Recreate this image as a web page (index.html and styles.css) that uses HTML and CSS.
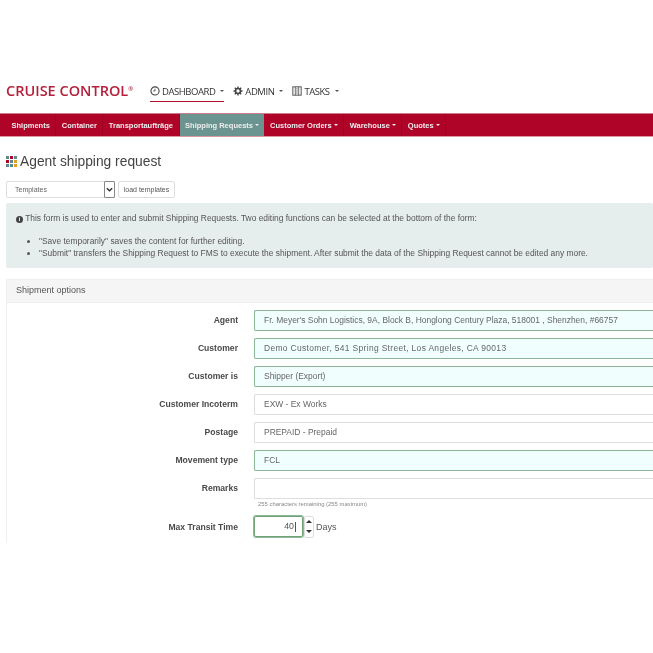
FILE: index.html
```html
<!DOCTYPE html>
<html lang="en">
<head>
    <meta charset="UTF-8">
    <meta name="viewport" content="width=device-width, initial-scale=1.0">
    <title>Agent shipping request</title>
    <link rel="stylesheet" href="styles.css">
</head>
<body>
    <div class="page">
        <header class="topbar">
            <div class="logo">CRUISE CONTROL<sup>®</sup></div>
            <nav class="topnav">
                <a class="topnav-item active">
                    <svg class="ico" viewBox="0 0 12 12"><circle cx="6" cy="6" r="4.9" fill="none" stroke="#444" stroke-width="1.3"/><path d="M6 3.2V6H3.8" fill="none" stroke="#444" stroke-width="1"/></svg>
                    DASHBOARD <span class="caret dark"></span>
                </a>
                <a class="topnav-item">
                    <svg class="ico" viewBox="0 0 12 12"><circle cx="6" cy="6" r="3" fill="none" stroke="#444" stroke-width="2"/><path d="M6 .6v2M6 9.4v2M.6 6h2M9.4 6h2M2.2 2.2l1.4 1.4M8.4 8.4l1.4 1.4M9.8 2.2L8.4 3.6M3.6 8.4L2.2 9.8" stroke="#444" stroke-width="1.7"/></svg>
                    ADMIN <span class="caret dark"></span>
                </a>
                <a class="topnav-item">
                    <svg class="ico" viewBox="0 0 12 12"><rect x="1" y="1" width="10" height="10" fill="none" stroke="#555" stroke-width="1.2"/><path d="M4 1v10M8 1v10M5 3.5h2M5 6h2M5 8.5h2" stroke="#555" stroke-width="1"/></svg>
                    TASKS <span class="caret dark"></span>
                </a>
            </nav>
        </header>

        <nav class="mainnav">
            <a>Shipments</a>
            <a>Container</a>
            <a>Transportaufträge</a>
            <a class="current">Shipping Requests <span class="caret"></span></a>
            <a>Customer Orders <span class="caret"></span></a>
            <a>Warehouse <span class="caret"></span></a>
            <a>Quotes <span class="caret"></span></a>
        </nav>

        <main class="content">
            <h1>
                <svg class="grid-ico" viewBox="0 0 11 11">
                    <rect x="0" y="0" width="3" height="3" fill="#5a8a8a"/><rect x="4" y="0" width="3" height="3" fill="#b0002a"/><rect x="8" y="0" width="3" height="3" fill="#5a8a8a"/>
                    <rect x="0" y="4" width="3" height="3" fill="#b0002a"/><rect x="4" y="4" width="3" height="3" fill="#5a8a8a"/><rect x="8" y="4" width="3" height="3" fill="#e0a020"/>
                    <rect x="0" y="8" width="3" height="3" fill="#5a8a8a"/><rect x="4" y="8" width="3" height="3" fill="#5a8a8a"/><rect x="8" y="8" width="3" height="3" fill="#e0a020"/>
                </svg>
                Agent shipping request
            </h1>

            <div class="template-row">
                <div class="template-select">
                    <span>Templates</span>
                    <span class="select-btn"><svg viewBox="0 0 10 10"><path d="M2 3.5l3 3 3-3" fill="none" stroke="#333" stroke-width="1.5"/></svg></span>
                </div>
                <button class="btn">load templates</button>
            </div>

            <div class="info-box">
                <p><span class="info-ico">i</span> This form is used to enter and submit Shipping Requests. Two editing functions can be selected at the bottom of the form:</p>
                <ul>
                    <li>"Save temporarily" saves the content for further editing.</li>
                    <li>"Submit" transfers the Shipping Request to FMS to execute the shipment. After submit the data of the Shipping Request cannot be edited any more.</li>
                </ul>
            </div>

            <section class="panel">
                <div class="panel-head">Shipment options</div>
                <div class="panel-body">
                    <div class="form-row">
                        <label>Agent</label>
                        <div class="field filled">Fr. Meyer's Sohn Logistics, 9A, Block B, Honglong Century Plaza, 518001 , Shenzhen, #66757</div>
                    </div>
                    <div class="form-row">
                        <label>Customer</label>
                        <div class="field filled wide">Demo Customer, 541 Spring Street, Los Angeles, CA 90013</div>
                    </div>
                    <div class="form-row">
                        <label>Customer is</label>
                        <div class="field filled">Shipper (Export)</div>
                    </div>
                    <div class="form-row">
                        <label>Customer Incoterm</label>
                        <div class="field">EXW - Ex Works</div>
                    </div>
                    <div class="form-row">
                        <label>Postage</label>
                        <div class="field">PREPAID - Prepaid</div>
                    </div>
                    <div class="form-row">
                        <label>Movement type</label>
                        <div class="field filled">FCL</div>
                    </div>
                    <div class="form-row remarks">
                        <label>Remarks</label>
                        <div class="field"></div>
                    </div>
                    <div class="hint">255 characters remaining (255 maximum)</div>
                    <div class="form-row transit">
                        <label>Max Transit Time</label>
                        <div class="number-field">40<span class="cursor"></span></div>
                        <div class="spinner"><span class="up"></span><span class="down"></span></div>
                        <span class="unit">Days</span>
                    </div>
                </div>
            </section>
        </main>
    </div>
</body>
</html>
```

FILE: styles.css
```css
html, body {
    margin: 0;
    padding: 0;
    background-color: #fff;
}
body {
    font-family: "Liberation Sans", Arial, sans-serif;
    color: #555;
    width: 653px;
    height: 653px;
    overflow: hidden;
}
.page {
    padding-top: 81px;
    height: 462px;
    overflow: hidden;
    filter: blur(0.35px);
}
.topbar {
    display: flex;
    align-items: flex-start;
    height: 32px;
    padding-left: 6px;
}
.logo {
    font-family: "Open Sans", sans-serif;
    font-size: 14.5px;
    font-weight: 600;
    line-height: 20px;
    color: #b5203c;
    width: 144px;
    white-space: nowrap;
}
.logo sup {
    font-size: 6px;
    line-height: 0;
    vertical-align: 5px;
}
.topnav {
    display: flex;
    gap: 9px;
}
.topnav-item {
    display: flex;
    align-items: center;
    gap: 2px;
    font-family: "Open Sans", sans-serif;
    font-size: 9.5px;
    letter-spacing: -0.45px;
    color: #333;
    height: 20px;
    border-bottom: 1px solid transparent;
    white-space: nowrap;
}
.topnav-item.active {
    border-bottom: 1px solid #b0122f;
}
.ico {
    width: 10px;
    height: 10px;
}
.caret {
    display: inline-block;
    width: 0;
    height: 0;
    border-left: 2px solid transparent;
    border-right: 2px solid transparent;
    border-top: 2px solid #eee;
    vertical-align: middle;
}
.caret.dark {
    border-top-color: #555;
    margin-left: 3px;
}
.mainnav {
    display: flex;
    height: 22px;
    padding-left: 6px;
    background-color: #b00328;
    border-top: 1px solid #c97c8c;
    border-bottom: 1px solid #d49aa6;
}
.mainnav a {
    display: flex;
    align-items: center;
    gap: 2px;
    padding: 0 5.5px;
    font-size: 7.5px;
    font-weight: bold;
    color: #eee;
    border-right: 1px solid #a00225;
    white-space: nowrap;
}
.mainnav a.current {
    background-color: #6b9390;
    border-right: 0;
}
.content {
    padding: 0 0 0 6px;
}
h1 {
    display: flex;
    align-items: center;
    gap: 3px;
    margin: 17px 0 0;
    font-size: 13.8px;
    font-weight: normal;
    color: #444;
    line-height: 16px;
}
.grid-ico {
    width: 11px;
    height: 11px;
    margin-top: -2px;
}
.template-row {
    display: flex;
    gap: 3px;
    margin-top: 11px;
}
.template-select {
    display: flex;
    justify-content: space-between;
    align-items: center;
    width: 99px;
    height: 15px;
    padding-left: 8px;
    border: 1px solid #ddd;
    border-radius: 2px;
    font-size: 7px;
    color: #666;
}
.select-btn {
    width: 9px;
    height: 15px;
    border: 1px solid #888;
    border-radius: 1px;
    margin-right: -1px;
    display: flex;
    align-items: center;
    justify-content: center;
}
.select-btn svg {
    width: 9px;
    height: 9px;
}
.btn {
    width: 57px;
    height: 17px;
    padding: 0;
    background: #fff;
    border: 1px solid #ddd;
    border-radius: 2px;
    font-family: inherit;
    font-size: 7px;
    color: #555;
}
.info-box {
    margin-top: 5px;
    height: 65px;
    box-sizing: border-box;
    padding: 10px 10px;
    background-color: #e6eded;
    border-radius: 2px;
    font-size: 8.42px;
    color: #555;
}
.info-box p {
    margin: 0;
    line-height: 11px;
    white-space: nowrap;
}
.info-box ul {
    margin: 12px 0 0;
    padding-left: 23px;
    line-height: 11.5px;
    white-space: nowrap;
}
.info-ico {
    display: inline-block;
    width: 7px;
    height: 7px;
    line-height: 7px;
    border-radius: 50%;
    background: #444;
    color: #fff;
    font-size: 6px;
    font-weight: bold;
    text-align: center;
}
.panel {
    margin-top: 11px;
    border: 1px solid #eee;
    border-right: 0;
    border-radius: 2px 0 0 0;
}
.panel-head {
    height: 22px;
    line-height: 21px;
    padding-left: 9px;
    background-color: #f5f5f5;
    border-bottom: 1px solid #eee;
    font-size: 9px;
    color: #555;
}
.panel-body {
    padding-top: 7px;
}
.form-row {
    display: flex;
    align-items: center;
    height: 20px;
    margin-bottom: 8px;
}
.form-row label {
    width: 231px;
    text-align: right;
    font-size: 8.6px;
    font-weight: bold;
    color: #4a4a4a;
    margin-right: 16px;
    flex: none;
}
.field {
    flex: 1;
    height: 19px;
    line-height: 19px;
    padding-left: 9px;
    border: 1px solid #ddd;
    border-right: 0;
    border-radius: 2px 0 0 2px;
    font-size: 8.45px;
    color: #666;
    white-space: nowrap;
}
.field.filled {
    background-color: #f0fffe;
    border-color: #8db597;
}
.field.wide {
    letter-spacing: 0.34px;
}
.remarks {
    margin-bottom: 2px;
}
.hint {
    margin-left: 251px;
    font-size: 5.9px;
    color: #888;
    line-height: 8px;
}
.transit {
    margin-top: 8px;
    height: 21px;
}
.number-field {
    width: 47px;
    height: 19px;
    line-height: 19px;
    text-align: right;
    border: 1px solid #6fa377;
    box-shadow: 0 0 0 1px #8fb89a;
    border-radius: 2px;
    font-size: 8.8px;
    color: #555;
}
.cursor {
    display: inline-block;
    width: 1px;
    height: 10px;
    margin: 0 6px 0 1px;
    vertical-align: middle;
    background: #555;
}
.spinner {
    display: flex;
    flex-direction: column;
    justify-content: space-around;
    align-items: center;
    width: 8px;
    height: 20px;
    margin-left: 1px;
    border: 1px solid #ddd;
    border-radius: 2px;
}
.spinner .up {
    width: 0;
    height: 0;
    border-left: 3px solid transparent;
    border-right: 3px solid transparent;
    border-bottom: 3px solid #333;
}
.spinner .down {
    width: 0;
    height: 0;
    border-left: 3px solid transparent;
    border-right: 3px solid transparent;
    border-top: 3px solid #333;
}
.unit {
    margin-left: 2px;
    font-size: 9px;
    color: #555;
}
```
